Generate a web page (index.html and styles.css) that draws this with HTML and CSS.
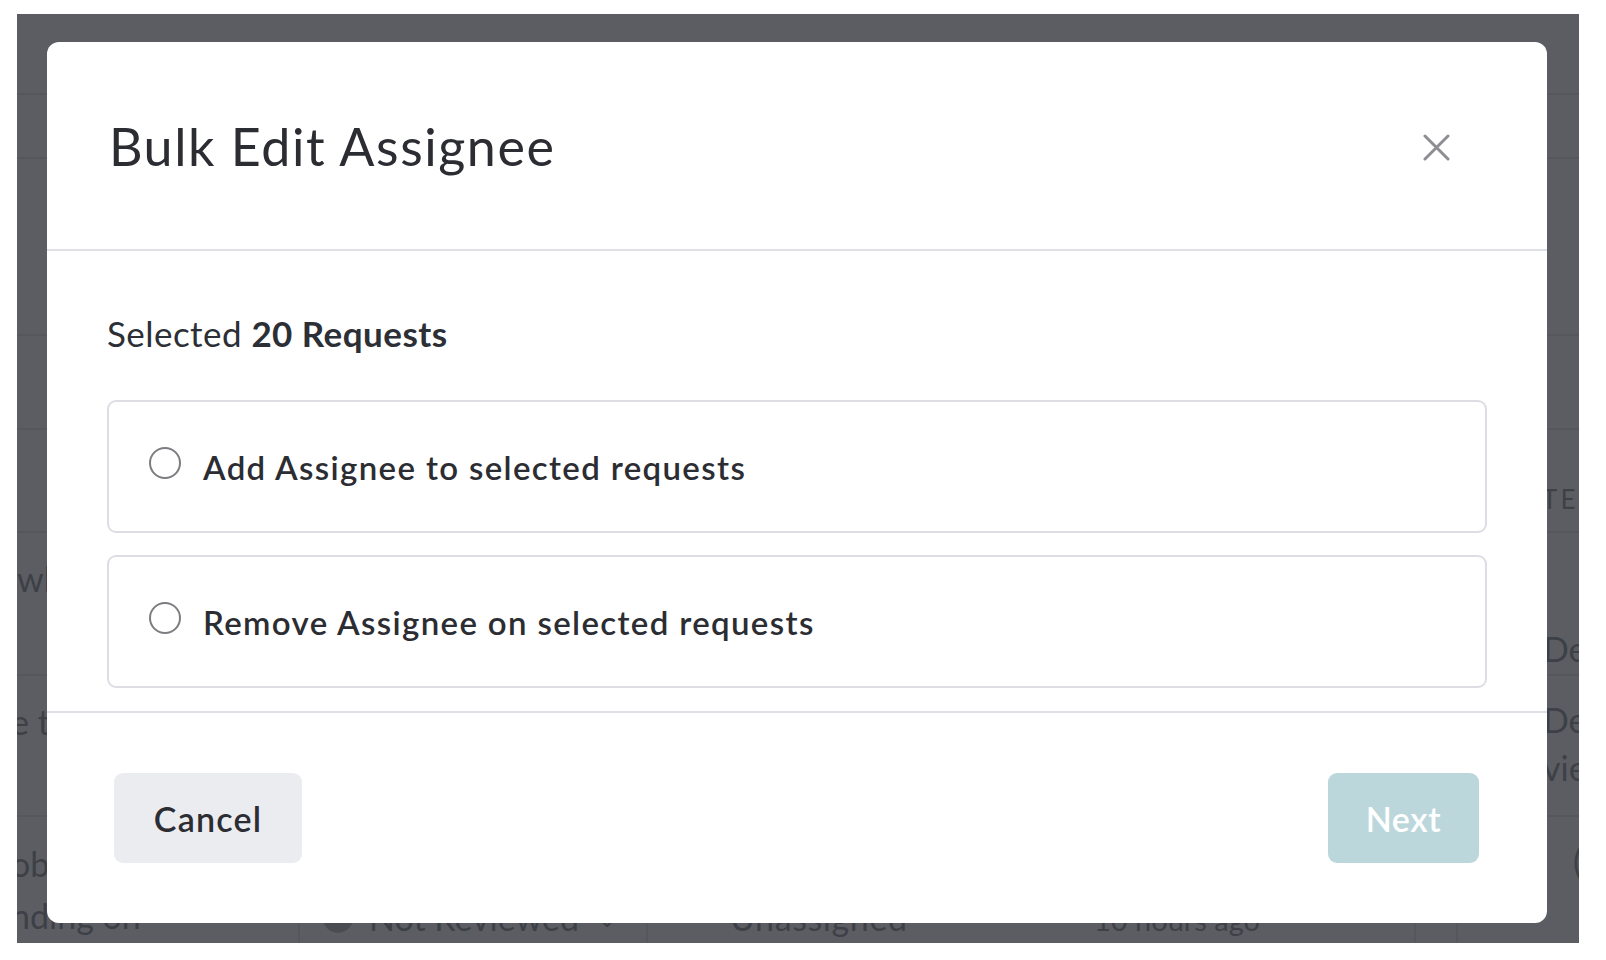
FILE: index.html
```html
<!DOCTYPE html>
<html lang="en">
<head>
<meta charset="utf-8">
<title>Bulk Edit Assignee</title>
<link rel="stylesheet" href="styles.css">
</head>
<body>
<div class="frame">
  <div class="page">
    <div class="prow r1"></div>
    <div class="prow r2"></div>
    <div class="prow r3"></div>
    <div class="prow r4"></div>
    <div class="prow r5"><span class="pc c1"></span><span class="pc cwide"></span><span class="pc clast head">DATE</span></div>
    <div class="prow r6"><span class="pc c1"><span>where</span></span><span class="pc cwide"></span><span class="pc clast"><span>Details</span></span></div>
    <div class="prow r7"><span class="pc c1"><span class="shift">e to</span></span><span class="pc cwide"></span><span class="pc clast"><span>Details</span><span>view</span></span></div>
    <div class="prow r8">
      <span class="pc c1"><span class="shift">ob</span><span class="shift">nding on</span></span>
      <span class="pc c2"><span class="cell-line"><span class="dot"></span>Not Reviewed <span class="chev">&#8964;</span></span></span>
      <span class="pc c3"><span>Unassigned</span></span>
      <span class="pc c4"><span>10 hours ago</span></span>
      <span class="pc c5"></span>
      <span class="pc c6"></span>
      <span class="pc clast"><span>(</span></span>
    </div>
  </div>
  <div class="overlay">
    <div class="modal">
      <div class="modal-header">
        <h1 class="modal-title">Bulk Edit Assignee</h1>
        <button class="close" aria-label="Close">
          <svg width="27" height="27" viewBox="0 0 27 27"><path d="M2 2 L25 25 M25 2 L2 25" stroke="#8d8e91" stroke-width="3" stroke-linecap="round" fill="none"/></svg>
        </button>
      </div>
      <div class="modal-body">
        <p class="selected">Selected <strong>20 Requests</strong></p>
        <label class="option"><span class="radio"></span><span class="option-text">Add Assignee to selected requests</span></label>
        <label class="option"><span class="radio"></span><span class="option-text">Remove Assignee on selected requests</span></label>
      </div>
      <div class="modal-footer">
        <button class="btn btn-cancel">Cancel</button>
        <button class="btn btn-next">Next</button>
      </div>
    </div>
  </div>
</div>
</body>
</html>
```
FILE: styles.css
```css
* { box-sizing: border-box; }
html, body { margin: 0; padding: 0; background: #ffffff; }
body { font-family: Lato, "Noto Sans", sans-serif; color: #2b2d33; }

.frame {
  position: relative;
  margin: 14px 0 0 17px;
  width: 1562px;
  height: 929px;
  overflow: hidden;
  background: #ffffff;
}

/* dimmed page underneath */
.page { display: flex; flex-direction: column; font-size: 34px; color: #2e3d4b; white-space: nowrap; }
.prow { display: flex; border-bottom: 2px solid #d2d4d8; }
.r1 { height: 81px; }
.r2 { height: 64px; }
.r3 { height: 177px; }
.r4 { height: 94px; }
.r5 { height: 103px; align-items: flex-end; }
.r6 { height: 143px; }
.r7 { height: 141px; }
.r8 { height: 140px; }
.pc { display: flex; flex-direction: column; flex: none; }
.c1 { width: 283px; padding-top: 22px; line-height: 48px; }
.shift { margin-left: -6px; }
.cwide { flex: 1 1 auto; }
.clast { width: 36px; padding-top: 20px; line-height: 48px; }
.r6 .clast { padding-top: 92px; }
.r7 .clast { padding-top: 20px; }
.r5 .clast.head { width: 78px; font-size: 26px; letter-spacing: 3px; padding-bottom: 17px; line-height: 30px; color: #3a3d44; }
.r8 .pc { border-right: 2px solid #d2d4d8; padding-top: 20px; line-height: 52px; }
.r8 .c1 { width: 283px; padding-top: 21px; }
.r8 .c2 { width: 348px; padding-top: 76px; padding-left: 23px; line-height: 50px; }
.cell-line { display: flex; align-items: center; }
.r8 .c3 { width: 364px; border-right: 0; padding-top: 76px; padding-left: 82px; letter-spacing: 0.6px; line-height: 50px; }
.r8 .c4 { width: 404px; padding-top: 78px; padding-left: 82px; line-height: 50px; font-size: 29px; }
.r8 .c5 { width: 42px; }
.r8 .c6 { width: 42px; border-right: 0; }
.r8 .clast { border-right: 0; padding-left: 73px; width: 79px; padding-top: 18px; }
.dot { display: inline-block; width: 30px; height: 30px; border-radius: 50%; background: #8a8f96; margin-right: 16px; }
.chev { font-size: 24px; margin-left: 18px; }

.overlay {
  position: absolute;
  inset: 0;
  background: rgba(64, 65, 71, 0.85);
  padding: 28px 0 0 30px;
}

.modal {
  width: 1500px;
  height: 881px;
  background: #ffffff;
  border-radius: 12px;
  display: flex;
  flex-direction: column;
  overflow: hidden;
}

.modal-header {
  height: 209px;
  display: flex;
  align-items: center;
  justify-content: space-between;
  padding: 0 97px 0 62px;
  border-bottom: 2px solid #dfe0e5;
}
.modal-title {
  margin: 0;
  font-size: 52px;
  font-weight: 400;
  color: #2b2d33;
  letter-spacing: 1.55px;
}
.close {
  border: 0;
  background: none;
  padding: 0;
  width: 27px;
  height: 27px;
  margin-top: 4px;
  display: flex;
}

.modal-body {
  height: 460px;
  padding: 60px 60px 0 60px;
  display: flex;
  flex-direction: column;
  gap: 22px;
}
.selected {
  margin: 0 0 23px 0;
  font-size: 35px;
  line-height: 44px;
  color: #2d2f36;
  letter-spacing: 0.45px;
}
.selected strong { font-weight: 700; }

.option {
  height: 133px;
  border: 2px solid #dcdee4;
  border-radius: 9px;
  display: flex;
  align-items: center;
  padding: 0 0 0 40px;
  gap: 22px;
}
.radio {
  width: 32px;
  height: 32px;
  border-radius: 50%;
  border: 2px solid #7c7d80;
  margin-bottom: 8px;
  flex: none;
}
.option-text {
  font-size: 33px;
  font-weight: 600;
  color: #2b2d33;
  letter-spacing: 1.35px;
}

.modal-footer {
  flex: 1;
  border-top: 2px solid #dfe0e5;
  display: flex;
  justify-content: space-between;
  align-items: flex-start;
  padding: 60px 68px 0 67px;
}
.btn {
  height: 90px;
  border: 0;
  border-radius: 9px;
  font-family: Lato, "Noto Sans", sans-serif;
  font-size: 34px;
  font-weight: 600;
}
.btn-cancel { width: 188px; background: #ebecf0; color: #2b2d33; letter-spacing: 1.2px; }
.btn-next { width: 151px; background: #bcd7db; color: #ffffff; letter-spacing: 0.6px; }
```
